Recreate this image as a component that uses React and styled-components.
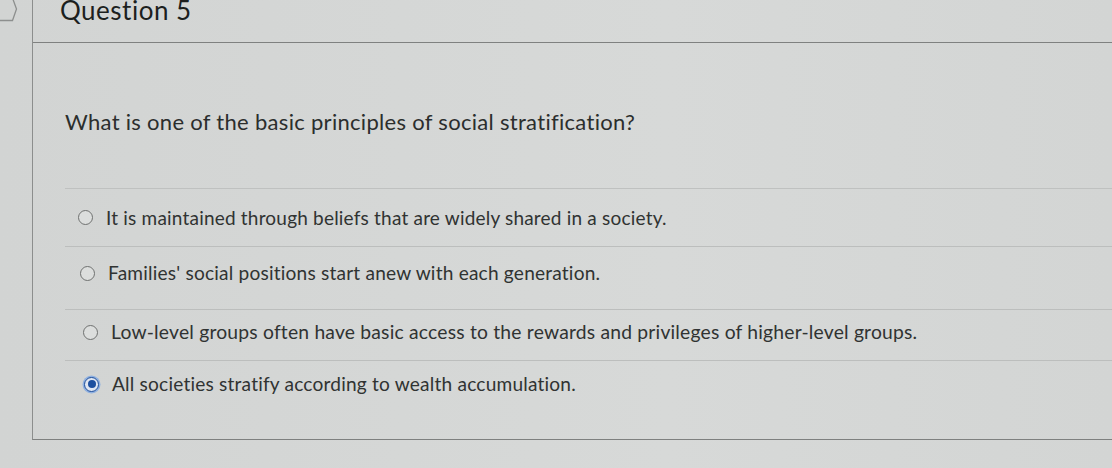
import React from "react";
import styled, { createGlobalStyle } from "styled-components";

const GlobalStyle = createGlobalStyle`
    html, body {
        margin: 0;
        padding: 0;
        background: #d4d6d5;
        font-family: Lato, "Open Sans", "Liberation Sans", sans-serif;
        overflow: hidden;
    }
`;

const Page = styled.div`
    display: flex;
    width: 1112px;
    height: 468px;
    background: linear-gradient(90deg, #d2d4d3 0%, #d7d9d8 60%, #d3d5d4 100%);
`;

const Rail = styled.div`
    width: 32px;
    flex: none;
`;

const TabMark = styled.svg`
    display: block;
`;

const Panel = styled.section`
    flex: 1;
    height: 439px;
    display: flex;
    flex-direction: column;
    border-left: 1px solid #8c8e8d;
    border-bottom: 1px solid #7e807f;
`;

const Header = styled.header`
    height: 42px;
    flex: none;
    padding-left: 27px;
    border-bottom: 1px solid #7f8180;
`;

const Title = styled.h2`
    margin: -2px 0 0;
    font-size: 26px;
    line-height: 24px;
    font-weight: 400;
    letter-spacing: 0.5px;
    color: #1c1f1e;
`;

const Body = styled.div`
    padding: 66px 0 0 32px;
`;

const Prompt = styled.p`
    margin: 0;
    font-size: 22px;
    line-height: 26px;
    letter-spacing: 0.3px;
    color: #2b2e2d;
`;

const Options = styled.ul`
    list-style: none;
    margin: 53px 0 0;
    padding: 0;
    border-top: 1px solid #bfc1c0;
`;

const Option = styled.li`
    height: ${(p) => p.$h}px;
    box-sizing: border-box;
    display: flex;
    align-items: center;
    padding-left: ${(p) => p.$indent}px;
    padding-bottom: ${(p) => p.$lift}px;
    border-bottom: ${(p) => (p.$last ? "none" : "1px solid #bcbebd")};
`;

const Radio = styled.span`
    width: 15px;
    height: 15px;
    flex: none;
    box-sizing: border-box;
    border-radius: 50%;
    border: 1.5px solid ${(p) => (p.$checked ? "#1f4f9a" : "#6f7170")};
    background: ${(p) => (p.$checked ? "#dfe6f2" : "#dcdedd")};
    display: flex;
    align-items: center;
    justify-content: center;
    box-shadow: ${(p) => (p.$checked ? "0 0 0 1.5px #8fb0e0" : "none")};

    &::after {
        content: "";
        display: ${(p) => (p.$checked ? "block" : "none")};
        width: 8px;
        height: 8px;
        border-radius: 50%;
        background: #1c4f9f;
    }
`;

const Label = styled.span`
    margin-left: 13px;
    font-size: ${(p) => p.$size}px;
    line-height: 22px;
    letter-spacing: 0.2px;
    color: #303332;
    white-space: nowrap;
`;

const answers = [
    { text: "It is maintained through beliefs that are widely shared in a society.", h: 58, lift: 0, indent: 13, size: 19 },
    { text: "Families' social positions start anew with each generation.", h: 63, lift: 10, indent: 15, size: 19.1 },
    { text: "Low-level groups often have basic access to the rewards and privileges of higher-level groups.", h: 51, lift: 6, indent: 18, size: 19.3 },
    { text: "All societies stratify according to wealth accumulation.", h: 50, lift: 4, indent: 19, size: 19.1, checked: true },
];

const App = () => (
    <>
        <GlobalStyle />
        <Page>
            <Rail>
                <TabMark width="20" height="24" viewBox="0 0 20 24">
                    <path
                        d="M0 20.5 H12.5 L16.5 9 L12.5 -2"
                        fill="none"
                        stroke="#8d8f8e"
                        strokeWidth="1.3"
                    />
                </TabMark>
            </Rail>
            <Panel>
                <Header>
                    <Title>Question 5</Title>
                </Header>
                <Body>
                    <Prompt>What is one of the basic principles of social stratification?</Prompt>
                    <Options>
                        {answers.map((a, i) => (
                            <Option
                                key={i}
                                $h={a.h}
                                $lift={a.lift}
                                $indent={a.indent}
                                $last={i === answers.length - 1}
                            >
                                <Radio $checked={a.checked} />
                                <Label $size={a.size}>{a.text}</Label>
                            </Option>
                        ))}
                    </Options>
                </Body>
            </Panel>
        </Page>
    </>
);

export default App;
